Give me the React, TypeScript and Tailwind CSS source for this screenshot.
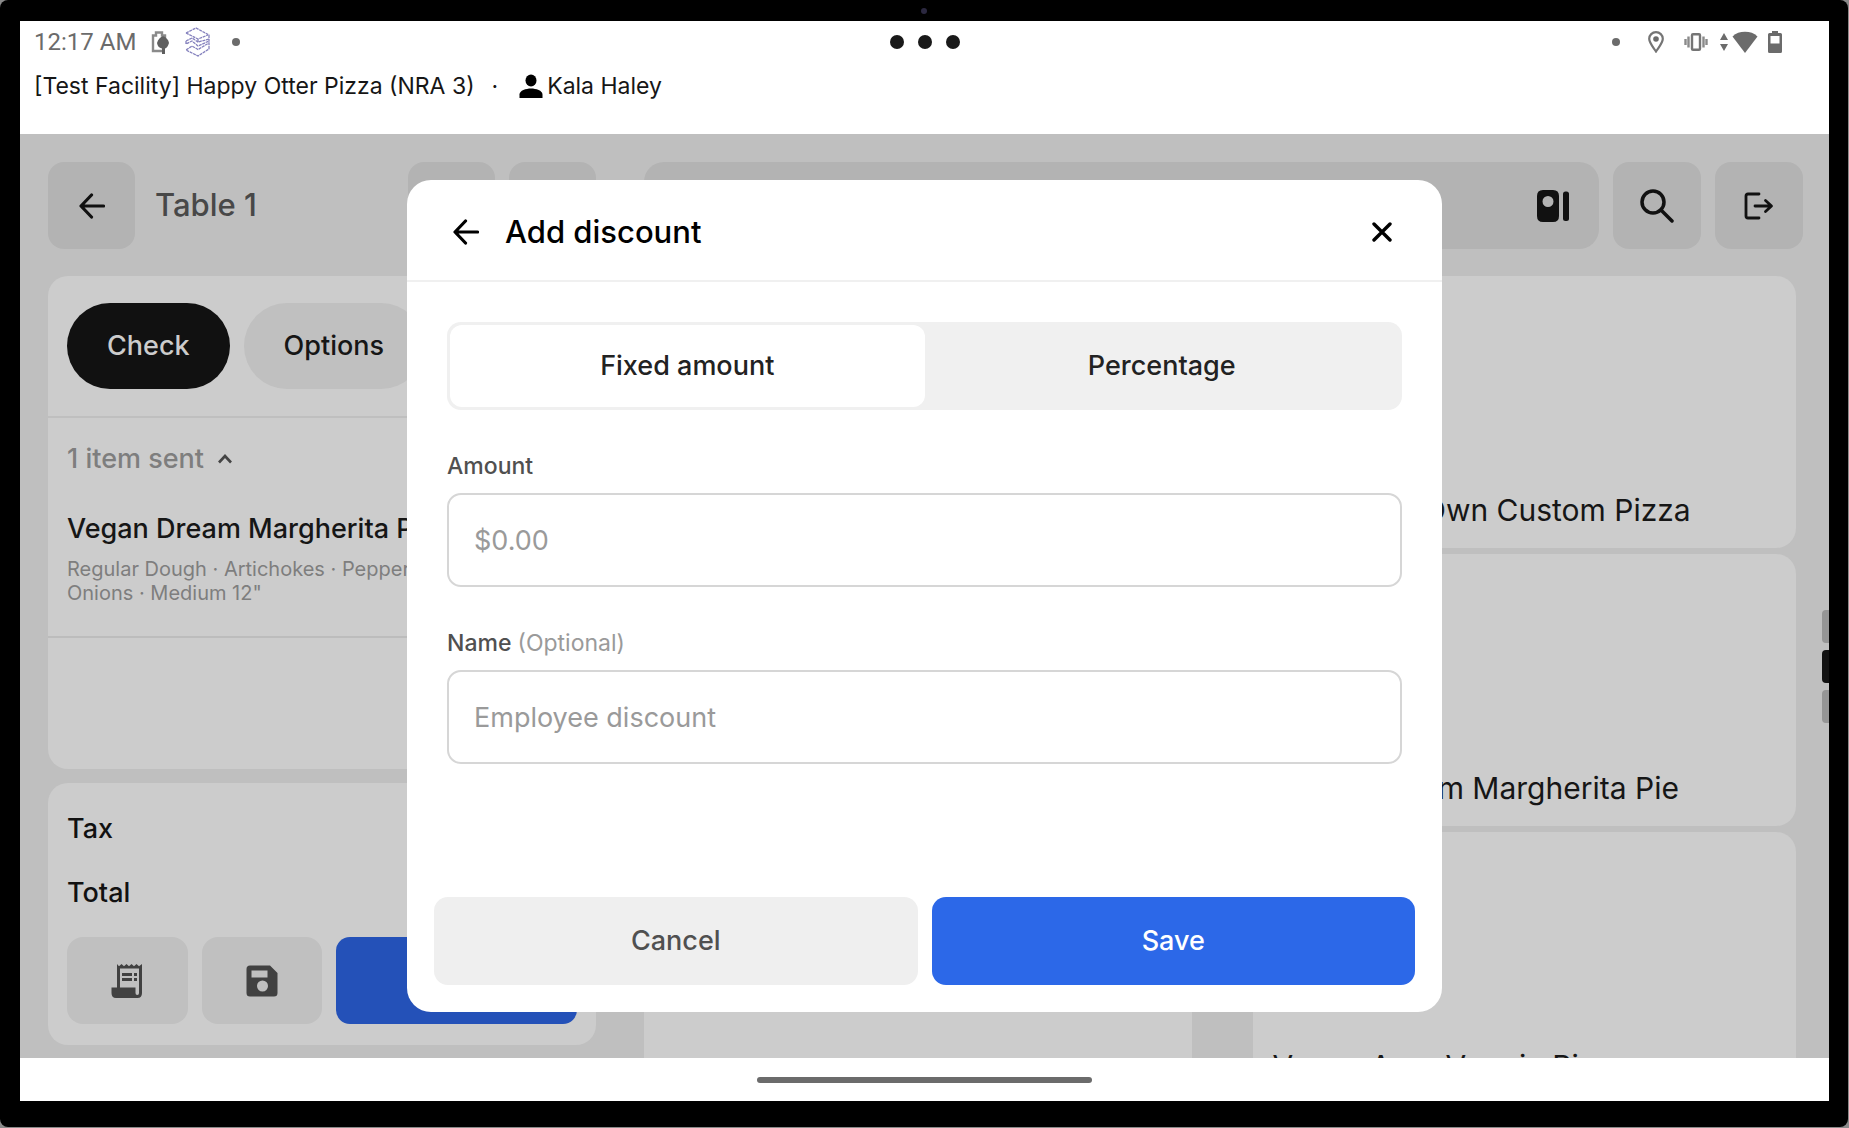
import { useState } from "react";

const menuItems = [
  "Craft Your Own Pie",
  "Build your Own Custom Pizza",
  "Classic Pepperoni Pie",
  "Vegan Dream Margherita Pie",
  "",
  "Vegan Aura Veggie Pie",
];

function ArrowLeft() {
  return (
    <svg viewBox="0 0 26 26" className="size-[26px]" fill="none" stroke="currentColor" strokeWidth="3.2" strokeLinecap="round" strokeLinejoin="round" aria-hidden="true">
      <path d="M24.500 13H2.500M12.500 2L2 13L12.500 24" />
    </svg>
  );
}

function StatusBar() {
  return (
    <div className="relative flex h-[41px] items-center justify-between pr-[47px] pl-3.5 text-[#6b6b6b]">
      <div className="flex items-center">
        <span className="font-[Roboto,sans-serif] text-2xl">12:17 AM</span>
        <svg viewBox="0 0 20 26" className="ml-3.5 h-6.5 w-5" aria-hidden="true">
          <path d="M12 22H3V6.500H6V3.500H12V6.500H15V9" fill="none" stroke="#8a8a8a" strokeWidth="2.4" />
          <path d="M7 14C8 10.500 10.500 8 13 7C16.500 8.500 18.500 11 19 14C18 17.500 16.500 19 15 19.500V25H12V19.500C9 19 7.500 17 7 14Z" fill="#5f5f5f" />
        </svg>
        <svg viewBox="0 0 28 30" className="ml-3.5 h-7.5 w-7" fill="none" stroke="#8480bd" strokeWidth="1.3" strokeDasharray="3 0.700" aria-hidden="true">
          <path d="M2 6L12 1L25 8V22L14 29L2 23L8 19L14 22.500L25 16" />
          <path d="M2 6L14 12L24 8M2 14L8 11L14 15L25 12M2 14V17L8 14L14 19L25 14M14 12V15" />
        </svg>
        <span className="ml-5 size-2 rounded-full bg-[#6b6b6b]" />
      </div>
      <div className="absolute inset-0 m-auto flex h-3.5 w-fit gap-3.5">
        <span className="size-3.5 rounded-full bg-[#191919]" />
        <span className="size-3.5 rounded-full bg-[#191919]" />
        <span className="size-3.5 rounded-full bg-[#191919]" />
      </div>
      <div className="flex items-center">
        <span className="size-2 rounded-full bg-[#6b6b6b]" />
        <svg viewBox="0 0 16 22" className="ml-7 h-5.5 w-4" aria-hidden="true">
          <path d="M8 1.200C4.200 1.200 1.200 4.100 1.200 7.800C1.200 12 5.500 16.500 8 20.500C10.500 16.500 14.800 12 14.800 7.800C14.800 4.100 11.800 1.200 8 1.200Z" fill="none" stroke="#757575" strokeWidth="2.2" />
          <circle cx="8" cy="8" r="2.800" fill="#6b6b6b" />
        </svg>
        <svg viewBox="0 0 24 18" className="ml-5 h-4.5 w-6" aria-hidden="true">
          <rect x="8" y="1.200" width="8" height="15.600" rx="1" fill="none" stroke="#757575" strokeWidth="2.4" />
          <path d="M4.500 3.500V14.500M1.500 6V12M19.500 3.500V14.500M22.500 6V12" stroke="#8a8a8a" strokeWidth="2.4" />
        </svg>
        <svg viewBox="0 0 8 18" className="ml-3 h-4.5 w-2" fill="#6b6b6b" aria-hidden="true">
          <path d="M4 0L8 7H0ZM4 18L0 11H8Z" />
        </svg>
        <svg viewBox="0 0 26 22" className="ml-1 h-5.5 w-6.5" fill="#6b6b6b" aria-hidden="true">
          <path d="M13 22L0.500 5.500C4 2.200 8 0.800 13 0.800S22 2.200 25.500 5.500Z" />
        </svg>
        <svg viewBox="0 0 14 22" className="ml-2.5 h-5.5 w-3.5" aria-hidden="true">
          <path d="M4 0H10V2H12.500Q14 2 14 3.500V20.500Q14 22 12.500 22H1.500Q0 22 0 20.500V3.500Q0 2 1.500 2H4ZM2.500 5V12.500H11.500V5Z" fill="#6b6b6b" fillRule="evenodd" />
        </svg>
      </div>
    </div>
  );
}

function CheckPanel() {
  return (
    <aside className="flex min-h-0 flex-col">
      <div className="flex items-center">
        <button aria-label="Back" className="flex size-[87px] items-center justify-center rounded-2xl bg-[#b3b3b3] text-[#111]">
          <ArrowLeft />
        </button>
        <h1 className="ml-5 text-[31px] font-medium text-[#484848]">Table 1</h1>
        <button aria-label="Guests" className="ml-auto size-[87px] rounded-2xl bg-[#b3b3b3]" />
        <button aria-label="More" className="ml-3.5 size-[87px] rounded-2xl bg-[#b3b3b3]" />
      </div>

      <section className="mt-[27px] flex h-[493px] flex-col rounded-[20px] bg-[#ccc]">
        <div className="flex gap-3.5 border-b-2 border-[#bfbfbf] px-[19px] py-[27px] text-[27px] leading-[86px] font-medium">
          <button className="rounded-full bg-[#111] px-10 text-[#ccc]">Check</button>
          <button className="rounded-full bg-[#c0c0c0] px-10 text-[#161616]">Options</button>
        </div>
        <div className="border-b-2 border-[#bcbcbc] px-[19px] pt-[23px] pb-[31px]">
          <button className="flex items-center gap-3.5 text-[27px] leading-9 font-medium text-[#7e7e7e]">
            1 item sent
            <svg viewBox="0 0 14 10" className="h-2.5 w-3.5" fill="none" stroke="#444" strokeWidth="2.600" aria-hidden="true">
              <path d="M1 8.500L7 2L13 8.500" />
            </svg>
          </button>
          <p className="mt-8 text-[27px] leading-10 font-medium whitespace-nowrap text-[#161616]">Vegan Dream Margherita Pie</p>
          <p className="mt-2 text-xl leading-6 text-[#7e7e7e]">
            Regular Dough · Artichokes · Peppers · Red
            <br />
            Onions · Medium 12"
          </p>
        </div>
      </section>

      <section className="mt-3.5 rounded-[20px] bg-[#ccc] px-[19px] pt-6 pb-[21px]">
        <dl className="text-[27px] leading-[44px] font-medium text-[#111]">
          <dt>Tax</dt>
          <dt className="mt-5">Total</dt>
        </dl>
        <div className="mt-[22px] flex h-[87px] gap-3.5">
          <button aria-label="Receipt" className="flex flex-1 items-center justify-center rounded-2xl bg-[#c0c0c0]">
            <svg viewBox="0 0 32 34" className="h-[34px] w-8" fill="#414141" aria-hidden="true">
              <path d="M6 0L8 2.200L10.500 0L13 2.200L15.500 0L18 2.200L20.500 0L23 2.200L25.500 0L28 2.200L31 0V29Q31 34 26.500 34H5Q0.500 34 0.500 29V23.500H6ZM9 4.500V23.500H24.500V29Q24.500 31 26.300 31T28 29V4.500Z" fillRule="evenodd" />
              <path d="M11 9H21V12H11ZM23 9H26V12H23ZM11 14H21V17H11ZM23 14H26V17H23Z" />
            </svg>
          </button>
          <button aria-label="Save check" className="flex flex-1 items-center justify-center rounded-2xl bg-[#c0c0c0]">
            <svg viewBox="0 0 32 32" className="size-8" fill="#414141" aria-hidden="true">
              <path d="M4 0.500H24L31.500 8V28Q31.500 31.500 28 31.500H4Q0.500 31.500 0.500 28V4Q0.500 0.500 4 0.500ZM5.500 5.500V12.500H21.500V5.500ZM16.500 15.500A5.500 5.500 0 1 0 16.500 26.500A5.500 5.500 0 1 0 16.500 15.500Z" fillRule="evenodd" />
            </svg>
          </button>
          <button aria-label="Pay" className="flex-2 rounded-[14px] bg-[#2451b8]" />
        </div>
      </section>
    </aside>
  );
}

function MenuPanel() {
  return (
    <section className="min-h-0 min-w-0">
      <div className="flex gap-3.5 text-[#111]">
        <div className="flex h-[87px] flex-1 items-center justify-end rounded-[20px] bg-[#b3b3b3] pr-[30px]">
          <button aria-label="Layout">
            <svg viewBox="0 0 32 32" className="size-8" fill="currentColor" aria-hidden="true">
              <path d="M6 0H16Q22 0 22 6V26Q22 32 16 32H6Q0 32 0 26V6Q0 0 6 0ZM11 6A5.500 5.500 0 1 0 11 17A5.500 5.500 0 1 0 11 6Z" fillRule="evenodd" />
              <rect x="26" y="1.500" width="6" height="29.500" rx="2.500" />
            </svg>
          </button>
        </div>
        <button aria-label="Search" className="flex h-[87px] w-[88px] items-center justify-center rounded-2xl bg-[#b3b3b3]">
          <svg viewBox="0 0 34 34" className="size-[34px]" fill="none" stroke="currentColor" strokeWidth="3.500" strokeLinecap="round" aria-hidden="true">
            <circle cx="13" cy="13" r="11" />
            <path d="M21 21L32 32" />
          </svg>
        </button>
        <button aria-label="Sign out" className="flex h-[87px] w-[88px] items-center justify-center rounded-2xl bg-[#b3b3b3]">
          <svg viewBox="0 0 30 28" className="h-7 w-[30px]" fill="none" stroke="currentColor" strokeWidth="2.800" strokeLinecap="round" strokeLinejoin="round" aria-hidden="true">
            <path d="M15 2H4Q2 2 2 4V24Q2 26 4 26H15" />
            <path d="M11 14H27M21.500 8.500L27.500 14L21.500 19.500" />
          </svg>
        </button>
      </div>
      <ul className="mt-[27px] mr-[7px] grid grid-cols-[547fr_543fr] gap-x-[61px] gap-y-1.5">
        {menuItems.map((name, index) => (
          <li key={index} className="flex h-[272px] items-end rounded-[20px] bg-[#ccc] px-5 pb-[18px] text-[30px] leading-10 text-[#161616]">
            {name && <span className="whitespace-nowrap">{name}</span>}
          </li>
        ))}
      </ul>
    </section>
  );
}

function DiscountDialog() {
  const [mode, setMode] = useState("fixed");
  const tab = "flex-1 rounded-[12px] text-[27px] font-medium text-[#222]";
  const input =
    "mt-[11px] h-[94px] w-full rounded-[14px] border-2 border-[#d6d6d6] bg-white px-[25px] text-[27px] text-[#222] outline-none placeholder:text-[#9a9a9a]";
  return (
    <div role="dialog" aria-label="Add discount" className="flex min-h-[832px] w-full max-w-[1035px] flex-col rounded-3xl bg-white">
      <header className="flex h-[102px] items-center border-b-2 border-[#f0f0f0] pt-1 pr-[50px] pl-[46px] text-black">
        <button aria-label="Back">
          <ArrowLeft />
        </button>
        <h2 className="ml-[26px] text-[31px] font-medium">Add discount</h2>
        <button aria-label="Close" className="ml-auto">
          <svg viewBox="0 0 20 20" className="size-5" fill="none" stroke="currentColor" strokeWidth="3.400" strokeLinecap="round" aria-hidden="true">
            <path d="M2 2L18 18M18 2L2 18" />
          </svg>
        </button>
      </header>
      <div className="flex flex-1 flex-col gap-10 px-10 pt-10">
        <div className="flex h-[88px] rounded-[14px] bg-[#f0f0f0] p-[3px]">
          <button onClick={() => setMode("fixed")} className={mode === "fixed" ? tab + " bg-white" : tab}>
            Fixed amount
          </button>
          <button onClick={() => setMode("percent")} className={mode === "percent" ? tab + " bg-white" : tab}>
            Percentage
          </button>
        </div>
        <div>
          <label htmlFor="amount" className="block text-[23px] leading-8 font-medium text-[#505050]">
            Amount
          </label>
          <input id="amount" placeholder="$0.00" className={input} />
        </div>
        <div>
          <label htmlFor="name" className="block text-[23px] leading-8 font-medium text-[#505050]">
            Name <span className="font-normal text-[#9a9a9a]">(Optional)</span>
          </label>
          <input id="name" placeholder="Employee discount" className={input} />
        </div>
      </div>
      <footer className="flex h-[115px] gap-3.5 px-[27px] pb-[27px] text-[27px] font-medium">
        <button className="flex-1 rounded-[14px] bg-[#efefef] text-[#505050]">Cancel</button>
        <button className="flex-1 rounded-[14px] bg-[#2c68e8] text-white">Save</button>
      </footer>
    </div>
  );
}

export default function App() {
  return (
    <div className="h-screen bg-[#8a8a8a] pr-px pb-px font-[Inter,sans-serif]">
      <div className="relative flex h-full flex-col rounded-lg bg-black pt-[21px] pr-[19px] pb-[26px] pl-5">
        <span className="absolute top-2 left-1/2 size-1.5 -translate-x-1/2 rounded-full bg-[#2b2840]" />
        <header className="h-[113px] shrink-0 bg-white">
          <StatusBar />
          <div className="flex items-center pt-1.5 pl-3.5 text-[23px] leading-9 text-[#161616]">
            <span>[Test Facility] Happy Otter Pizza (NRA 3)</span>
            <span className="mx-[17px]">·</span>
            <svg viewBox="0 0 24 24" className="mx-1 size-6 text-black" fill="currentColor" aria-hidden="true">
              <ellipse cx="12" cy="6.500" rx="5.500" ry="6" />
              <path d="M0.500 24V20.500C0.500 16.500 7 14.500 12 14.500S23.500 16.500 23.500 20.500V24Z" />
            </svg>
            <span>Kala Haley</span>
          </div>
        </header>
        <main className="relative min-h-0 flex-1 overflow-hidden bg-[#bfbfbf]">
          <div className="grid h-full grid-cols-[548fr_1159fr] gap-12 pt-7 pr-[26px] pl-7">
            <CheckPanel />
            <MenuPanel />
          </div>
          <div className="absolute top-[476px] right-0 flex flex-col gap-[7px]">
            <span className="h-[33px] w-[7px] rounded-l-sm bg-[#959595]" />
            <span className="h-[33px] w-[7px] rounded-l-sm bg-[#111]" />
            <span className="h-[33px] w-[7px] rounded-l-sm bg-[#959595]" />
          </div>
          <div className="absolute inset-0 flex items-center justify-center">
            <DiscountDialog />
          </div>
        </main>
        <footer className="flex h-[43px] shrink-0 items-center justify-center bg-white">
          <span className="h-1.5 w-[335px] rounded-full bg-[#6b6b6b]" />
        </footer>
      </div>
    </div>
  );
}
